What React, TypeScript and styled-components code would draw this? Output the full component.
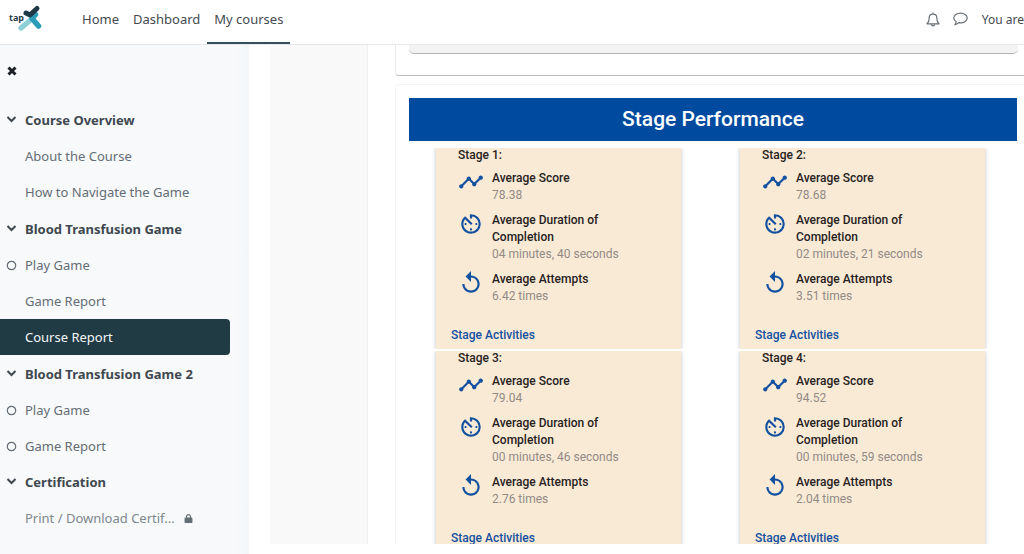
import React from "react";
import styled, { createGlobalStyle } from "styled-components";
import { MdAvTimer, MdReplay, MdTimeline } from "react-icons/md";
import { FaLock } from "react-icons/fa6";

const Global = createGlobalStyle`
  * { box-sizing: border-box; }
  body { margin: 0; background: #fff; font-family: "Noto Sans", "Open Sans", sans-serif; font-size: 14px; color: #1d2125; overflow: hidden; }
  #root { height: 100vh; }
`;

const Page = styled.div`
  display: flex;
  flex-direction: column;
  height: 100vh;
  overflow: hidden;
`;

const Header = styled.header`
  display: flex;
  align-items: stretch;
  flex: none;
  height: 45px;
  border-bottom: 1px solid #e6e7e9;
  background: #fff;
`;

const Brand = styled.a`
  display: flex;
  padding: 4px 0 0 8px;
  width: 75px;
`;

const Nav = styled.nav`
  display: flex;
`;

const NavLink = styled.a<{ $active?: boolean }>`
  padding: 9px 7px 0;
  line-height: 20px;
  font-size: 13px;
  color: #444a50;
  text-decoration: none;
  border-bottom: 2px solid ${(p) => (p.$active ? "#35505a" : "transparent")};
`;

const UserBar = styled.div`
  display: flex;
  align-items: center;
  margin-left: auto;
  padding-bottom: 6px;
  white-space: nowrap;
  font-size: 12px;
  color: #444a50;
`;

const IconButton = styled.button`
  display: flex;
  padding: 0;
  margin-right: 13px;
  border: 0;
  background: none;
  color: #6a7075;
`;

const LoginNote = styled.span`
  margin-left: 1px;
`;

const Body = styled.div`
  display: flex;
  flex: 1;
  min-height: 0;
`;

const Sidebar = styled.aside`
  flex: none;
  width: 249px;
  padding-top: 20px;
  background: linear-gradient(to right, #f7f9fb 236px, #f3f6f8 249px);
`;

const CloseButton = styled.button`
  display: block;
  height: 14px;
  margin: 0 0 23px 6px;
  padding: 0;
  border: 0;
  background: none;
`;

const List = styled.ul`
  margin: 0;
  padding: 0;
  list-style: none;
`;

const Section = styled.li`
  margin-bottom: 1px;
  &:nth-last-child(2) { margin-bottom: 0; }
`;

const SectionToggle = styled.button`
  display: flex;
  align-items: center;
  width: 230px;
  height: 36px;
  padding: 0;
  border: 0;
  background: none;
  font: bold 13px "Noto Sans", sans-serif;
  color: #3f484f;
  text-align: left;
`;

const Marker = styled.span`
  display: flex;
  flex: none;
  width: 25px;
  padding-left: 6px;
`;

const Item = styled.a<{ $active?: boolean; $dim?: boolean }>`
  display: flex;
  align-items: center;
  width: 230px;
  height: 36px;
  font-size: 13px;
  border-radius: 0 4px 4px 0;
  text-decoration: none;
  background: ${(p) => (p.$active ? "#213b45" : "transparent")};
  color: ${(p) => (p.$active ? "#f4f7f8" : p.$dim ? "#7f878e" : "#656d75")};
`;

const LockBox = styled.span`
  display: flex;
  margin-left: 9px;
  color: #656d75;
`;

const Main = styled.main`
  flex: 1;
  display: flex;
  min-width: 0;
  margin: 0 0 10px 21px;
  overflow: hidden;
`;

const Gutter = styled.div`
  flex: none;
  width: 98px;
  background: #f9f9fa;
  border-right: 1px solid #efeff0;
`;

const Report = styled.div`
  flex: 1;
  min-width: 0;
  padding-left: 27px;
`;

const PreviousCard = styled.section`
  height: 31px;
  padding: 0 6px 0 13px;
  border: 1px solid #ececec;
  border-top: 0;
  border-right: 0;
  border-bottom-color: #bdbdbd;
  border-radius: 0 0 0 4px;
`;

const PreviousPanel = styled.div`
  height: 9px;
  background: #f3f3f3;
  border-bottom: 1px solid #b5b5b5;
  border-radius: 0 0 5px 5px;
`;

const Card = styled.section`
  margin-top: 8px;
  padding: 13px 7px 24px 13px;
  border: 1px solid #f4f4f4;
  border-right: 0;
  border-radius: 4px 0 0 0;
`;

const Banner = styled.h2`
  margin: 0 0 7px;
  height: 43px;
  background: #004a9f;
  color: #fff;
  font: 500 21px/42px Roboto, sans-serif;
  text-align: center;
`;

const Stages = styled.div`
  display: grid;
  grid-template-columns: 1fr 1fr;
  row-gap: 2px;
`;

const Stage = styled.article`
  height: 201px;
  margin: 0 32px 0 27px;
  padding: 0 15px;
  background: #f9ead6;
  box-shadow: 0 0 4px #bdbdbd;
  clip-path: inset(0 -4px);
  font: 12px/17px Roboto, sans-serif;
  color: #27221d;
`;

const StageTitle = styled.h3`
  margin: 0 0 8px 7px;
  font: 500 12px/14px Roboto, sans-serif;
`;

const Metric = styled.div`
  display: flex;
  gap: 8px;
  margin: 0 0 8px 7px;
  svg { flex: none; margin-top: -1px; color: #1350a0; }
`;

const MetricText = styled.dl`
  margin: 0;
  width: 130px;
`;

const Label = styled.dt`
  font-weight: 500;
  font-size: 12px;
`;

const Value = styled.dd`
  margin: 0;
  white-space: nowrap;
  color: #918b84;
`;

const ActivitiesLink = styled.a`
  display: block;
  margin-top: 22px;
  font-weight: 500;
  color: #1350a0;
  text-decoration: none;
`;

const LogoText = styled.text`
  font: bold 9px "Noto Sans", sans-serif;
`;

const Logo = () => (
  <svg width="36" height="30" viewBox="0 0 36 30" aria-label="tapX">
    <path d="M22 16.500L13 24" stroke="#8fd0d8" strokeWidth="5.500" strokeLinecap="round" />
    <path d="M27.500 10.500L24 14.500L30.500 22" fill="none" stroke="#2a9cb8" strokeWidth="5.500" strokeLinecap="round" strokeLinejoin="round" />
    <path d="M18 9L22 11L29 4.500" fill="none" stroke="#1f3a47" strokeWidth="5" strokeLinecap="round" strokeLinejoin="round" />
    <LogoText x="1" y="17" fill="#27404b">tap</LogoText>
  </svg>
);

const Bell = () => (
  <svg width="14" height="15" viewBox="0 0 14 15" fill="none" stroke="currentColor" strokeWidth="1.200" strokeLinejoin="round" aria-hidden>
    <path d="M7 0.600V2M1 11.800C2.800 10.200 3.200 8.500 3.200 6C3.200 3.500 4.800 2.200 7 2.200S10.800 3.500 10.800 6C10.800 8.500 11.200 10.200 13 11.800Z" />
    <path d="M5.400 12.200A1.600 1.700 0 0 0 8.600 12.200" />
  </svg>
);

const Bubble = () => (
  <svg width="15" height="14" viewBox="0 0 15 14" fill="none" stroke="currentColor" strokeWidth="1.200" strokeLinejoin="round" aria-hidden>
    <path d="M7.500 1.200C11.200 1.200 14.200 3.300 14.200 6S11.200 10.800 7.500 10.800C6.800 10.800 6.300 10.700 5.700 10.600C4.700 11.700 3.400 12.500 1.800 12.700C2.600 11.800 3 10.800 3.100 9.700C1.600 8.800 0.800 7.500 0.800 6C0.800 3.300 3.800 1.200 7.500 1.200Z" />
  </svg>
);

const Chevron = () => (
  <svg width="11" height="11" viewBox="0 0 11 11" aria-hidden>
    <path d="M1.500 2L5.500 6L9.500 2" fill="none" stroke="#3f484f" strokeWidth="2" />
  </svg>
);

const Circle = () => (
  <svg width="11" height="11" viewBox="0 0 11 11" aria-hidden>
    <circle cx="5.500" cy="5.500" r="4.200" fill="none" stroke="#656d75" strokeWidth="1.200" />
  </svg>
);

type Entry = { text: string; circle?: boolean; active?: boolean; locked?: boolean };

const sections: { title: string; items: Entry[] }[] = [
  { title: "Course Overview", items: [{ text: "About the Course" }, { text: "How to Navigate the Game" }] },
  {
    title: "Blood Transfusion Game",
    items: [{ text: "Play Game", circle: true }, { text: "Game Report" }, { text: "Course Report", active: true }],
  },
  {
    title: "Blood Transfusion Game 2",
    items: [{ text: "Play Game", circle: true }, { text: "Game Report", circle: true }],
  },
  { title: "Certification", items: [{ text: "Print / Download Certif...", locked: true }] },
];

const stages = [
  { name: "Stage 1:", score: "78.38", duration: "04 minutes, 40 seconds", attempts: "6.42 times" },
  { name: "Stage 2:", score: "78.68", duration: "02 minutes, 21 seconds", attempts: "3.51 times" },
  { name: "Stage 3:", score: "79.04", duration: "00 minutes, 46 seconds", attempts: "2.76 times" },
  { name: "Stage 4:", score: "94.52", duration: "00 minutes, 59 seconds", attempts: "2.04 times" },
];

export default function App() {
  return (
    <Page>
      <Global />
      <Header>
        <Brand href="#"><Logo /></Brand>
        <Nav>
          <NavLink href="#">Home</NavLink>
          <NavLink href="#">Dashboard</NavLink>
          <NavLink href="#" $active>My courses</NavLink>
        </Nav>
        <UserBar>
          <IconButton aria-label="Notifications"><Bell /></IconButton>
          <IconButton aria-label="Messages"><Bubble /></IconButton>
          <LoginNote>You are</LoginNote>
        </UserBar>
      </Header>
      <Body>
        <Sidebar>
          <CloseButton aria-label="Close course index">
            <svg width="12" height="12" viewBox="0 0 12 12">
              <path d="M2.500 2.500L9.500 9.500M9.500 2.500L2.500 9.500" stroke="#1d2125" strokeWidth="3" />
            </svg>
          </CloseButton>
          <List>
            {sections.map((s) => (
              <Section key={s.title}>
                <SectionToggle><Marker><Chevron /></Marker>{s.title}</SectionToggle>
                {s.items.map((i) => (
                  <Item key={i.text} href="#" $active={i.active} $dim={i.locked}>
                    <Marker>{i.circle && <Circle />}</Marker>
                    {i.text}
                    {i.locked && <LockBox><FaLock size={9} /></LockBox>}
                  </Item>
                ))}
              </Section>
            ))}
          </List>
        </Sidebar>
        <Main>
          <Gutter />
          <Report>
            <PreviousCard><PreviousPanel /></PreviousCard>
            <Card>
              <Banner>Stage Performance</Banner>
              <Stages>
                {stages.map((s) => (
                  <Stage key={s.name}>
                    <StageTitle>{s.name}</StageTitle>
                    <Metric>
                      <MdTimeline size={26} />
                      <MetricText><Label>Average Score</Label><Value>{s.score}</Value></MetricText>
                    </Metric>
                    <Metric>
                      <MdAvTimer size={26} />
                      <MetricText><Label>Average Duration of Completion</Label><Value>{s.duration}</Value></MetricText>
                    </Metric>
                    <Metric>
                      <MdReplay size={26} />
                      <MetricText><Label>Average Attempts</Label><Value>{s.attempts}</Value></MetricText>
                    </Metric>
                    <ActivitiesLink href="#">Stage Activities</ActivitiesLink>
                  </Stage>
                ))}
              </Stages>
            </Card>
          </Report>
        </Main>
      </Body>
    </Page>
  );
}
